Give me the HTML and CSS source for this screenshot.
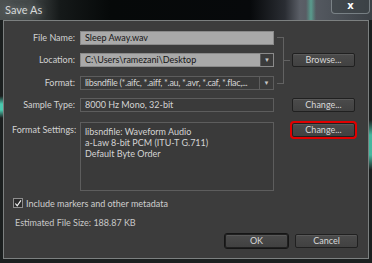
FILE: index.html
```html
<!DOCTYPE html>
<html lang="en">
<head>
  <meta charset="UTF-8">
  <meta name="viewport" content="width=device-width, initial-scale=1">
  <title>Save As</title>
  <link rel="stylesheet" href="styles.css">
</head>
<body>
  <div class="window">
    <!-- TITLE BAR -->
    <div class="titlebar">
      <span class="title">Save As</span>
      <button class="close">x</button>
    </div>

    <div class="frame">
      <div class="dialog">
        <div class="form">
          <label class="lbl">File Name:</label>
          <div class="field light">Sleep Away.wav</div>
          <div class="bracket">
            <span class="bracket-line"></span>
            <span class="bracket-tick"></span>
          </div>

          <label class="lbl">Location:</label>
          <div class="field light combo">
            <span class="combo-text">C:\Users\ramezani\Desktop</span>
            <span class="arrow">&#9660;</span>
          </div>
          <button class="btn">Browse...</button>

          <label class="lbl">Format:</label>
          <div class="field dark combo">
            <span class="combo-text tight">libsndfile (*.aifc, *.aiff, *.au, *.avr, *.caf, *.flac,...</span>
            <span class="arrow">&#9660;</span>
          </div>

          <label class="lbl">Sample Type:</label>
          <div class="field dark">8000 Hz Mono, 32-bit</div>
          <button class="btn">Change...</button>

          <label class="lbl top">Format Settings:</label>
          <div class="field dark settings">
            <div>libsndfile: Waveform Audio</div>
            <div>a-Law 8-bit PCM (ITU-T G.711)</div>
            <div>Default Byte Order</div>
          </div>
          <button class="btn marked">Change...</button>
        </div>

        <div class="check-row">
          <span class="checkbox">
            <svg width="9" height="9" viewBox="0 0 9 9"><path d="M1.5 4.5 L3.6 7 L7.8 1" fill="none" stroke="#f2f2f2" stroke-width="1.3"/></svg>
          </span>
          <span>Include markers and other metadata</span>
        </div>
        <div class="size">Estimated File Size: 188.87 KB</div>

        <div class="actions">
          <button class="btn default">OK</button>
          <button class="btn">Cancel</button>
        </div>
      </div>
    </div>
  </div>
</body>
</html>
```

FILE: styles.css
```css
/* Global */
* {
  box-sizing: border-box;
}
body {
  margin: 0;
  background: #1b1f1f;
  font-family: Lato, "Noto Sans", sans-serif;
  font-size: 9px;
  color: #cfcfcf;
}
.window {
  width: 372px;
  height: 263px;
  display: flex;
  flex-direction: column;
  background:
    linear-gradient(180deg, rgba(0,0,0,0) 0, rgba(0,0,0,0) 96px, rgba(80,220,190,0.9) 104px, rgba(80,220,190,0.9) 110px, rgba(0,0,0,0) 118px) left / 3px 100% no-repeat,
    linear-gradient(180deg, rgba(0,0,0,0) 0, rgba(0,0,0,0) 120px, rgba(80,220,190,0.8) 135px, rgba(80,220,190,0.8) 155px, rgba(0,0,0,0) 170px) right / 3px 100% no-repeat,
    #1b1f1f;
}

/* TITLE BAR */
.titlebar {
  height: 20px;
  display: flex;
  justify-content: space-between;
  align-items: flex-start;
  background:
    linear-gradient(90deg, rgba(0,0,0,0) 306px, rgba(90,200,170,0.6) 311px, rgba(0,0,0,0) 316px),
    linear-gradient(90deg, #4c5151 0, #434848 30px, #151919 60px, #060909 110px, #07090b 250px, #2a2d33 285px, #5b5f67 300px, #4e535a 330px, #3b4045 372px);
}
.title {
  padding-left: 5px;
  line-height: 20px;
  font-size: 11px;
  color: #d6d9d9;
  text-shadow: 0 0 6px rgba(200,210,210,0.5);
}
.close {
  width: 39px;
  height: 14px;
  margin-right: 2px;
  padding: 0 0 2px;
  background: rgba(60,66,70,0.6);
  border: 1px solid rgba(190,200,205,0.45);
  border-top: none;
  border-radius: 0 0 4px 4px;
  color: #fff;
  font-family: "DejaVu Sans", sans-serif;
  font-size: 10px;
  font-weight: bold;
  line-height: 10px;
}

/* DIALOG */
.frame {
  flex: 1;
  padding: 0 3px 4px 3px;
}
.dialog {
  height: 100%;
  display: flex;
  flex-direction: column;
  background: #3c3c3c;
  border: 1px solid #7c8080;
}
.form {
  display: grid;
  grid-template-columns: 68px 194px 18px 63px;
  grid-template-rows: 22px 23px 22px 24px 69px;
  padding: 10px 0 0 8px;
}
.lbl {
  grid-column: 1;
  height: 14px;
  padding-right: 5px;
  text-align: right;
  line-height: 14px;
  color: #d2d2d2;
  white-space: nowrap;
}
.lbl.top {
  padding-top: 1px;
}
.field {
  grid-column: 2;
  height: 14px;
  padding: 0 4px;
  line-height: 12px;
  white-space: nowrap;
  overflow: hidden;
}
.field.light {
  background: #a9a9a9;
  border: 1px solid #8a8a8a;
  color: #151515;
}
.field.dark {
  background: #3a3a3a;
  border: 1px solid #5d5d5d;
  color: #d4d4d4;
}
.combo {
  display: flex;
  padding-right: 0;
}
.combo-text {
  flex: 1;
  overflow: hidden;
}
.combo-text.tight {
  letter-spacing: -0.3px;
}
.combo .arrow {
  width: 14px;
  text-align: center;
  font-size: 6px;
  color: #c8c8c8;
  background: #3b3b3b;
  border-left: 1px solid #5d5d5d;
}
.field.light .arrow {
  margin: -1px -1px -1px 0;
  border: 1px solid #5d5d5d;
  line-height: 12px;
}
.settings {
  height: 69px;
  padding: 3px 4px;
  line-height: 11px;
}

/* Bracket that joins the first three rows */
.bracket {
  grid-row: 1 / 4;
  grid-column: 3;
  display: flex;
  align-items: center;
  margin: 6px 0 14px 3px;
}
.bracket-line {
  align-self: stretch;
  width: 7px;
  border: 1px solid #626262;
  border-left: none;
}
.bracket-tick {
  width: 6px;
  height: 1px;
  background: #626262;
}

/* BUTTONS */
.btn {
  width: 63px;
  height: 14px;
  padding: 0;
  font-family: inherit;
  font-size: 9px;
  line-height: 12px;
  color: #d8d8d8;
  background: linear-gradient(#4b4b4b, #414141);
  border: 1px solid #202020;
  border-radius: 2px;
  box-shadow: inset 0 1px 0 rgba(255,255,255,0.08);
}
.form .btn {
  grid-column: 4;
}
.btn.marked {
  outline: 2px solid #e00000;
  margin-top: 1px;
}
.btn.default {
  outline: 1px solid #151515;
}

/* BOTTOM */
.check-row {
  display: flex;
  align-items: center;
  gap: 3px;
  margin: 7px 0 0 9px;
  height: 10px;
}
.checkbox {
  width: 10px;
  height: 10px;
  display: flex;
  align-items: center;
  justify-content: center;
  border: 1px solid #8e8e8e;
  background: #2c2c2c;
}
.size {
  margin: 9px 0 0 11px;
  color: #c8c8c8;
}
.actions {
  display: flex;
  justify-content: flex-end;
  gap: 7px;
  margin-top: auto;
  padding: 0 10px 10px 0;
}
```
